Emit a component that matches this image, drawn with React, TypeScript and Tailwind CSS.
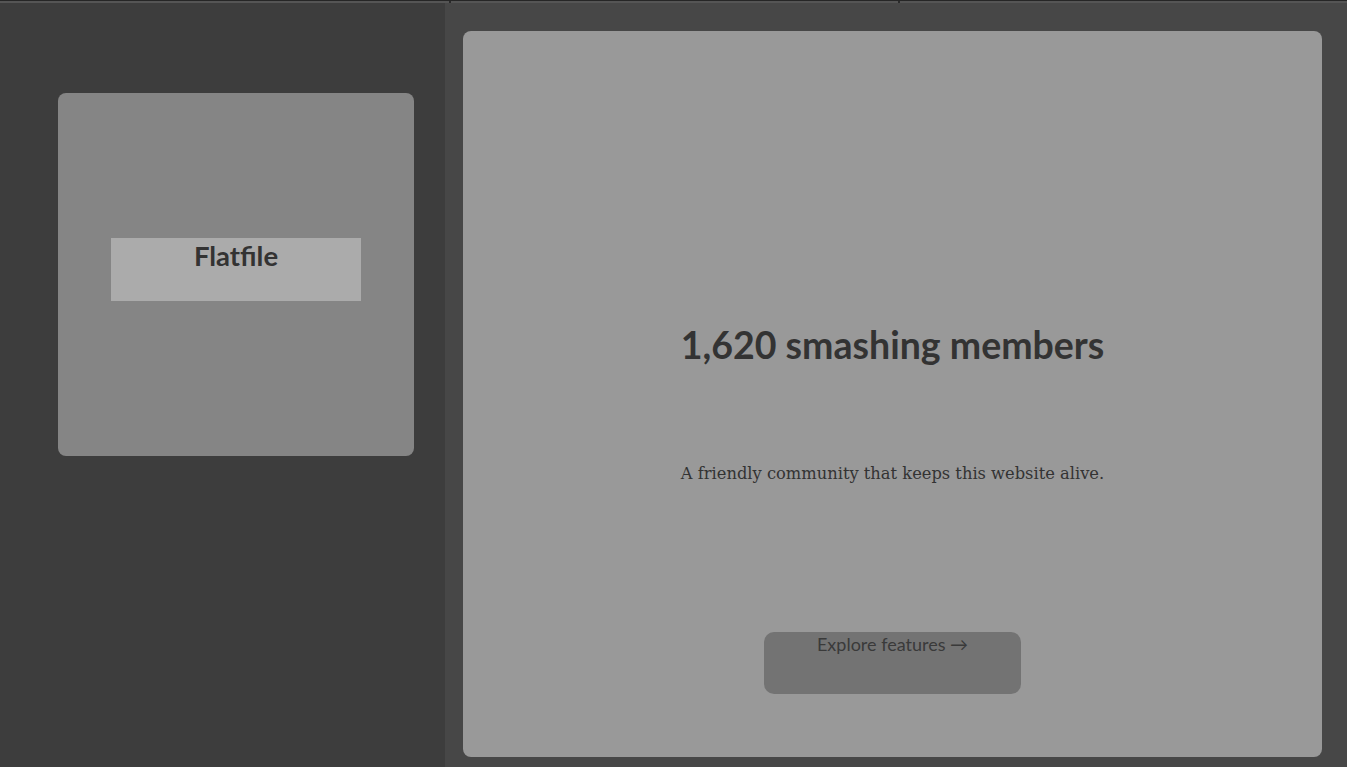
export default function App() {
  return (
    <div className="w-[1347px] h-[767px] flex flex-col bg-[#3d3d3d] overflow-hidden" style={{ fontFamily: "Nunito, Lato, 'Noto Sans', sans-serif" }}>
      <div className="h-[3px] flex border-t border-[#262626] bg-[#555555]">
        <div className="w-[449px]" />
        <div className="w-[2px] bg-[#2a2a2a]" />
        <div className="w-[447px]" />
        <div className="w-[2px] bg-[#2a2a2a]" />
      </div>
      <div className="flex flex-1 min-h-0">
        <div className="w-[445px] bg-[#3d3d3d] pt-[90px] pl-[58px]">
          <div className="w-[356px] h-[363px] rounded-[8px] bg-[#858585] flex justify-center pt-[145px]">
            <div className="w-[250px] h-[63px] bg-[#ababab] flex justify-center">
              <span className="text-[27.5px] font-bold text-[#333333] leading-[36px]" style={{ fontFamily: "Lato, 'Noto Sans', sans-serif" }}>Flatfile</span>
            </div>
          </div>
        </div>
        <div className="flex-1 bg-[#474747] pt-[28px] pl-[18px] pr-[25px] pb-[10px]">
          <div className="h-full rounded-[8px] bg-[#999999] flex flex-col items-center">
            <h1 className="mt-[292px] text-[37.5px] font-bold text-[#333333] leading-[44px]" style={{ fontFamily: "Lato, 'Noto Sans', sans-serif" }}>1,620 smashing members</h1>
            <p className="mt-[93px] text-[16.3px] text-[#333333] leading-[28px]" style={{ fontFamily: "'DejaVu Serif', 'Liberation Serif', serif" }}>A friendly community that keeps this website alive.</p>
            <div className="mt-[144px] w-[257px] h-[62px] rounded-[10px] bg-[#737373] flex justify-center">
              <span className="text-[18px] text-[#3a3a3a] leading-[24px]" style={{ fontFamily: "Lato, 'Noto Sans', sans-serif" }}>Explore features →</span>
            </div>
          </div>
        </div>
      </div>
    </div>
  );
}
